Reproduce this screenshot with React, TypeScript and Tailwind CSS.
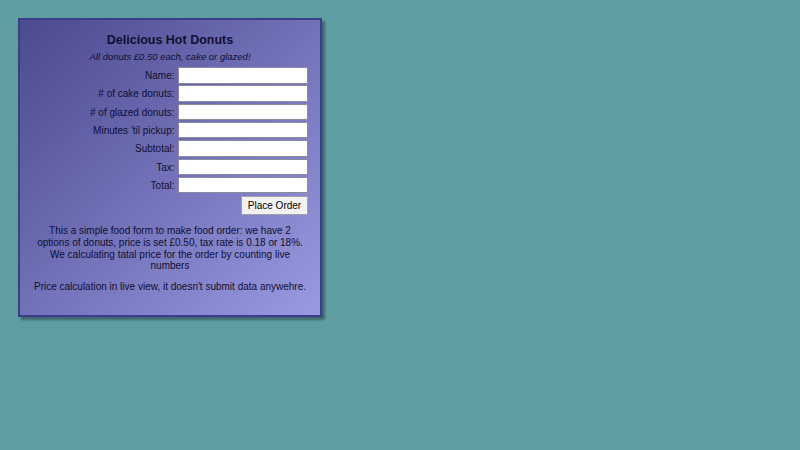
const FIELDS = [
  "Name:",
  "# of cake donuts:",
  "# of glazed donuts:",
  "Minutes 'til pickup:",
  "Subtotal:",
  "Tax:",
  "Total:",
];

export default function App() {
  return (
    <div className="w-[800px] h-[450px] bg-[#5f9ea0] p-[18px] font-['Liberation_Sans',Arial,sans-serif] text-[#10102e]">
      <div className="w-[304px] h-[299px] border-2 border-[#3c3c88] bg-gradient-to-br from-[#4c4a90] to-[#9a9ae2] shadow-[3px_3px_2px_rgba(40,70,80,0.6)] px-[12px] pt-[12.5px]">
        <h1 className="text-center text-[12.5px] font-bold leading-[15px]">Delicious Hot Donuts</h1>
        <p className="text-center text-[9.5px] italic leading-[11px] mt-[3px]">All donuts £0.50 each, cake or glazed!</p>
        <div className="flex flex-col mt-[5.5px]">
          {FIELDS.map((f) => (
            <div key={f} className="flex items-start justify-end gap-[3.5px] h-[18.33px]">
              <label className="text-[10px] leading-[17.5px]">{f}</label>
              <input className="w-[130px] h-[16.5px] bg-white border border-[#8a8a9a] outline-none" />
            </div>
          ))}
        </div>
        <div className="flex justify-end mt-[1px]">
          <button className="w-[67px] h-[19px] bg-[#f2f2f2] border border-[#a0a0a8] text-[10px] text-black leading-none">Place Order</button>
        </div>
        <p className="text-center text-[10px] leading-[11.67px] mt-[10px] px-[2px]">
          This a simple food form to make food order: we have 2 options of donuts, price is set £0.50, tax rate is 0.18 or 18%. We calculating tatal price for the order by counting live numbers
        </p>
        <p className="text-center text-[10px] leading-[11.67px] mt-[9.5px] whitespace-nowrap">Price calculation in live view, it doesn't submit data anywehre.</p>
      </div>
    </div>
  );
}
